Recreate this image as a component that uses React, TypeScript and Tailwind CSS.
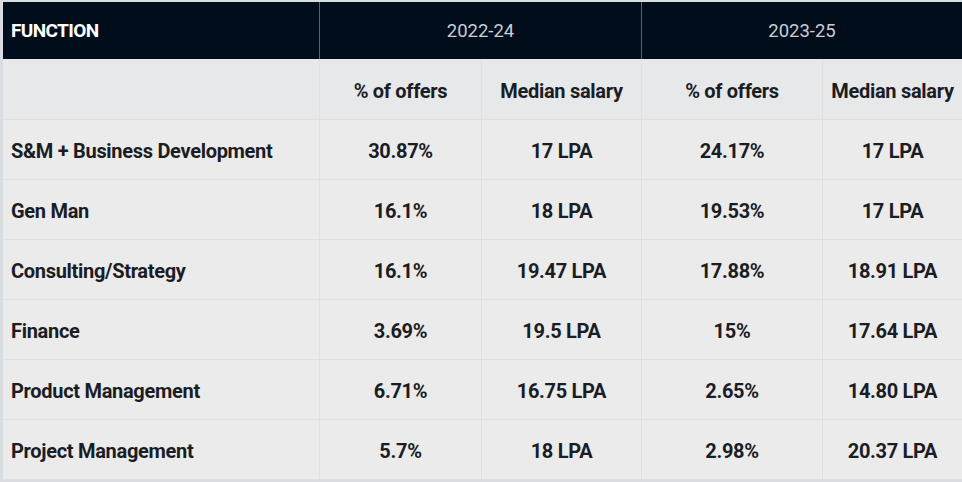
import React from "react";

const rows = [
  ["S&M + Business Development", "30.87%", "17 LPA", "24.17%", "17 LPA"],
  ["Gen Man", "16.1%", "18 LPA", "19.53%", "17 LPA"],
  ["Consulting/Strategy", "16.1%", "19.47 LPA", "17.88%", "18.91 LPA"],
  ["Finance", "3.69%", "19.5 LPA", "15%", "17.64 LPA"],
  ["Product Management", "6.71%", "16.75 LPA", "2.65%", "14.80 LPA"],
  ["Project Management", "5.7%", "18 LPA", "2.98%", "20.37 LPA"],
];

export default function App() {
  return (
    <div
      className="w-[962px] h-[482px] bg-[#d9dde2] pt-[2px] pl-[3px] overflow-hidden"
      style={{ fontFamily: "Roboto, 'Liberation Sans', sans-serif" }}
    >
      <div className="w-[959px] h-[478px] bg-[#ebebec] flex flex-col">
        <div className="h-[57px] bg-[#020d1b] grid grid-cols-[316px_322px_321px]">
          <div className="flex items-center pl-[8px] pt-[2px] text-white font-bold text-[19px] tracking-[-0.6px]">FUNCTION</div>
          <div className="flex items-center justify-center border-l border-[#5b6470] text-[#c9ced5] text-[18.5px] pt-[2px]">2022-24</div>
          <div className="flex items-center justify-center border-l border-[#5b6470] text-[#c9ced5] text-[18.5px] pt-[2px]">2023-25</div>
        </div>
        <div className="h-[61px] grid grid-cols-[316px_162px_160px_181px_140px] bg-[#e7e8ea] text-[#1a1d23] font-bold text-[20px] tracking-[-0.3px] border-b border-[#dfe0e2]">
          <div />
          <div className="flex items-center justify-center border-l border-[#dfe0e2] pt-[3px]">% of offers</div>
          <div className="flex items-center justify-center border-l border-[#dfe0e2] pt-[3px]">Median salary</div>
          <div className="flex items-center justify-center border-l border-[#dfe0e2] pt-[3px]">% of offers</div>
          <div className="flex items-center justify-center border-l border-[#dfe0e2] pt-[3px]">Median salary</div>
        </div>
        {rows.map((r, i) => (
          <div
            key={i}
            className="h-[60px] grid grid-cols-[316px_162px_160px_181px_140px] text-[#1a1d23] font-bold text-[20px] tracking-[-0.3px] border-b border-[#dfe0e2]"
          >
            <div className="flex items-center pl-[8px] pt-[2px]">{r[0]}</div>
            <div className="flex items-center justify-center border-l border-[#dfe0e2] pt-[2px]">{r[1]}</div>
            <div className="flex items-center justify-center border-l border-[#dfe0e2] pt-[2px]">{r[2]}</div>
            <div className="flex items-center justify-center border-l border-[#dfe0e2] pt-[2px]">{r[3]}</div>
            <div className="flex items-center justify-center border-l border-[#dfe0e2] pt-[2px]">{r[4]}</div>
          </div>
        ))}
      </div>
    </div>
  );
}
